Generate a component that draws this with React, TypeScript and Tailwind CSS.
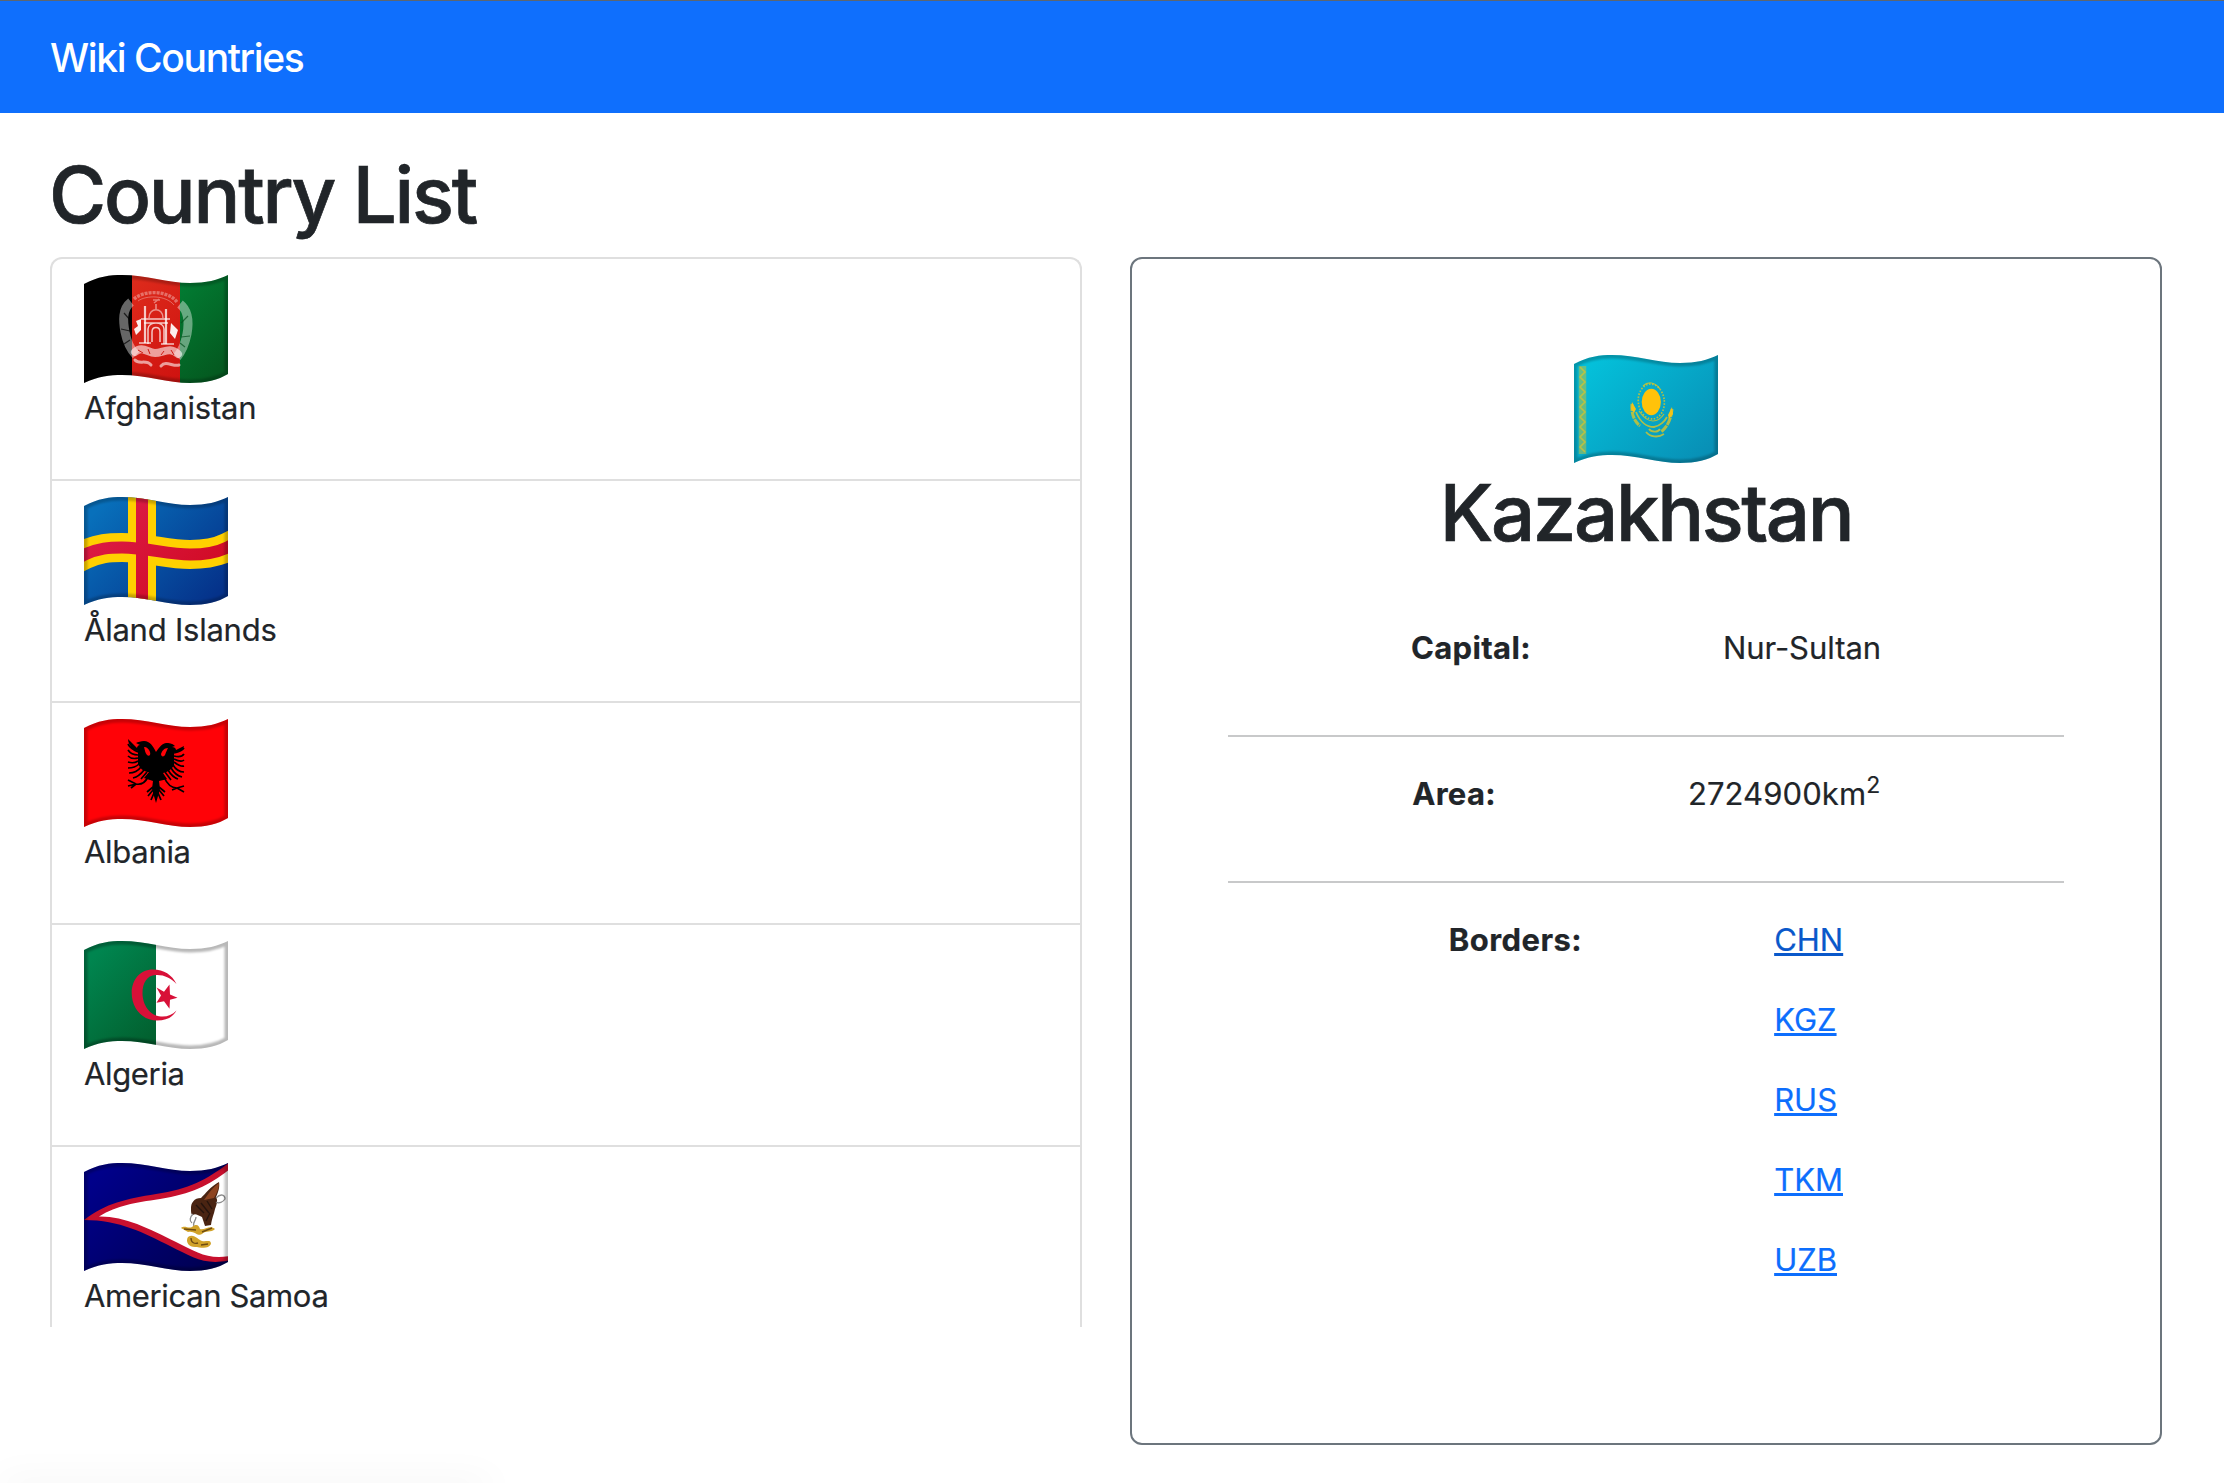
import { ReactNode, useId } from "react";

const WAVE =
  "M0 9 C14 1.5 26 0 38 0 C62 0 84 8 106 8 C122 8 134 5 144 0 V99 C134 105 122 108 106 108 C84 108 62 100 38 100 C26 100 14 101.5 0 108 Z";

const BAND =
  "M-12 64 L0 58 C14 51 26 50.5 38 50.5 C62 50.5 84 57.5 106 57.5 C122 57.5 134 55 144 50 L156 44";

function WavingFlag({ label, children, edge = 0.22 }: { label: string; children: ReactNode; edge?: number }) {
  const id = useId();
  return (
    <svg role="img" aria-label={label} viewBox="0 0 144 108" className="block h-[108px] w-[144px] shrink-0">
      <defs>
        <clipPath id={`${id}c`}>
          <path d={WAVE} />
        </clipPath>
        <filter id={`${id}b`} x="-10%" y="-10%" width="120%" height="120%">
          <feGaussianBlur stdDeviation="1" />
        </filter>
      </defs>
      <g clipPath={`url(#${id}c)`}>
        {children}
        <path d={WAVE} fill="none" stroke="#000" strokeOpacity={edge} strokeWidth="7" filter={`url(#${id}b)`} />
      </g>
    </svg>
  );
}

function Shade({ id, from, to }: { id: string; from: string; to: string }) {
  return (
    <defs>
      <linearGradient id={id} gradientUnits="userSpaceOnUse" x1="20" y1="5" x2="125" y2="105">
        <stop offset="0" stopColor={from} />
        <stop offset="1" stopColor={to} />
      </linearGradient>
    </defs>
  );
}

function Afghanistan() {
  return (
    <WavingFlag label="Flag of Afghanistan">
      <Shade id="af-r" from="#e0301e" to="#cc0d0d" />
      <Shade id="af-g" from="#00923f" to="#045a20" />
      <rect width="48" height="108" fill="#000" />
      <rect x="48" width="48" height="108" fill="url(#af-r)" />
      <rect x="96" width="48" height="108" fill="url(#af-g)" />
      <g fill="none" stroke="#fff">
        <path d="M47 27 C38 34 39 46 41 57 C43 67 46 74 52 80" strokeWidth="9" strokeOpacity="0.4" />
        <path d="M96 29 C105 36 105 48 103 59 C101 69 98 76 93 82" strokeWidth="9" strokeOpacity="0.4" />
        <path d="M50 24 C60 15 84 15 93 27" strokeWidth="3.4" strokeOpacity="0.34" strokeDasharray="3 1" />
        <path d="M54 26 C62 20 82 20 90 30" strokeWidth="0.8" strokeOpacity="0.4" />
      </g>
      <g stroke="#000" strokeOpacity="0.7" strokeWidth="1.2">
        <path d="M40 38 L47 46 M37 54 L46 56 M40 69 L46 65" />
        <path d="M104 41 L97 48 M106 61 L97 62 M101 72 L96 68" stroke="#04501d" />
      </g>
      <g fill="none" stroke="#fff" strokeOpacity="0.75" strokeWidth="1.5">
        <path d="M61 31 V68 M82 34 V69" strokeWidth="2.2" />
        <path d="M65 43 C65 32 79 32 79 43 M72 29 V34" strokeOpacity="0.5" />
        <path d="M57 44 H86 M60 48 H84 M64 69 V54 C64 46 80 46 80 54 V69 M68 67 V57 C68 51 76 51 76 57 V67" />
        <path d="M69 25 H76 M70 28 L75 24" strokeOpacity="0.4" />
        <path d="M55 68 H67 M77 69 H90" />
      </g>
      <path d="M52 46 L57 44 V55 L52 60 L50 54 L54 51 Z M87 48 L94 55 L91 64 L86 58 Z" fill="#fff" fillOpacity="0.92" />
      <g fill="none" stroke="#fff" strokeOpacity="0.58" strokeLinecap="round">
        <path d="M51 77 C58 70 64 78 71 78 C79 78 86 71 94 79" strokeWidth="8" />
        <path d="M51 85 C55 90 62 84 67 90 M77 91 C82 85 89 92 95 90" strokeWidth="3" />
      </g>
      <path d="M54 75 L59 78 M64 74 L66 79 M80 76 L77 80 M87 75 L90 80" stroke="#cf1c14" strokeWidth="1" />
    </WavingFlag>
  );
}

function Aland() {
  return (
    <WavingFlag label="Flag of Åland Islands">
      <Shade id="ax-b" from="#0870bb" to="#05328a" />
      <Shade id="ax-r" from="#dd1c49" to="#cf0820" />
      <rect width="144" height="108" fill="url(#ax-b)" />
      <rect x="44" width="28" height="108" fill="#ffd000" />
      <path d={BAND} fill="none" stroke="#ffd000" strokeWidth="29" />
      <rect x="52" width="12" height="108" fill="url(#ax-r)" />
      <path d={BAND} fill="none" stroke="url(#ax-r)" strokeWidth="12" />
    </WavingFlag>
  );
}

function Albania() {
  return (
    <WavingFlag label="Flag of Albania">
      <rect width="144" height="108" fill="#ff0207" />
      <path
        d="M72 33 C69 27 66 22 60 22 C57 22 54 23 52 24 L56 26 C54 26 53 28 53 29 L44 20 C44 24 46 27 50 31 L54 32 V45 C57 51 61 53 65 53 L60 59 C63 60 66 61 69 62 L68 70 L72 84 L76 70 L75 62 C78 61 81 61 83 60 L79 54 C84 53 88 50 90 46 V33 L94 33 C98 31 100 29 100 27 L92 31 C92 29 90 28 88 28 L91 27 C88 24 85 24 82 24 C77 25 75 29 72 33 Z"
        fill="#000"
      />
      <g fill="none" stroke="#000" strokeWidth="1.7">
        <path d="M54 33 C50 31 46 29 44 25 M54 36 C50 36 46 34 44 31 M54 39 C50 40 46 39 44 37 M54 42 C51 44 47 44 44 43 M55 45 C52 48 48 49 44 49 M57 48 C54 52 50 54 45 54 M60 51 C57 55 53 58 49 59 M63 53 L57 60" />
        <path d="M90 34 C94 33 98 32 100 29 M90 37 C94 38 98 38 100 35 M90 40 C94 42 98 43 100 41 M90 43 C94 46 97 48 100 47 M89 46 C92 51 96 53 100 53 M87 49 C90 54 94 57 98 58 M84 51 C87 56 91 59 94 60 M81 53 L87 61" />
        <path d="M64 58 C61 64 57 66 52 65 L44 67 M52 65 L44 61 M52 65 L47 69" />
        <path d="M80 58 C83 65 88 69 93 69 L100 67 M93 69 L100 73 M93 69 L88 71" />
        <path d="M69 68 L63 73 M69 71 L64 77 M70 74 L67 81 M75 68 L81 73 M75 71 L80 77 M74 74 L77 81" />
      </g>
      <path d="M60 28 C63 28 65 30 66 33 C67 36 65 38 63 36 C61 34 61 31 60 28 Z M84 29 C80 29 78 32 77 35 C77 38 80 38 81 36 C82 33 83 31 84 29 Z" fill="#ff0207" />
    </WavingFlag>
  );
}

function Algeria() {
  return (
    <WavingFlag label="Flag of Algeria" edge={0.28}>
      <Shade id="dz-g" from="#00854f" to="#034f20" />
      <rect width="144" height="108" fill="#fff" />
      <rect width="72" height="108" fill="url(#dz-g)" />
      <path
        d="M92.5 43 C88 34 80 28.6 69 28.6 C56 28.6 47.7 39 47.7 52 C47.7 67 58 79.5 73 79.5 C83 79.5 89 76 92.5 69.5 C88 74 83 76 77 75.5 C66 75 58.5 64 58.5 52 C58.5 42 63 34.5 71.5 34 C80 33.5 87 37 92.5 43 Z"
        fill="#d81038"
      />
      <path d="M85.5 43.5 L86 53.5 L93.5 56.7 L86 58.7 L85.5 67.8 L80 60.2 L72.5 61.8 L77 54.5 L72.5 46.5 L80 50.8 Z" fill="#d81038" />
    </WavingFlag>
  );
}

function AmericanSamoa() {
  return (
    <WavingFlag label="Flag of American Samoa" edge={0.24}>
      <Shade id="as-b" from="#00008a" to="#000052" />
      <rect width="144" height="108" fill="url(#as-b)" />
      <path d="M0 57 C22 40 42 36 72 31 C106 26 124 16 146 -1 V97 C122 103 108 94 86 83 C60 70 36 57 0 57 Z" fill="#c8102e" />
      <path d="M15 53.5 C34 42 50 40 76 36 C108 31 126 22 146 6 V93 C124 97 112 89 92 79 C64 65 40 53 15 53.5 Z" fill="#fff" />
      <path
        d="M135 19 C127 23 121 31 117 35 C110 35 107 40 107 45 C107 49 107 52 109 52 C111 50 114 52 118 54 L121 63 L127 62 C128 55 130 51 131 46 C133 41 134 37 132 34 C134 30 136 24 135 19 Z"
        fill="#4a2412"
      />
      <path d="M135 20 C129 24 124 31 120 37 L130 35 C133 30 135 25 135 20 Z" fill="#8d4420" />
      <path d="M112 42 L120 50 M117 40 L125 50 M123 38 L128 46 M122 58 L126 50" stroke="#26140d" strokeWidth="1.4" />
      <path d="M132 35 C137 30 141 32 141 36 C139 39 135 41 132 39 M109 51 C106 54 105 58 108 60 M112 54 C112 58 108 60 110 63" fill="none" stroke="#8c8c8c" strokeWidth="1.3" />
      <path d="M97 65 C101 62 104 66 108 64 C113 60 115 63 116 66 C120 68 126 61 131 66 C127 70 122 67 118 71 C114 74 110 67 104 69 Z" fill="#d2a32a" />
      <path d="M104 74 C110 70 114 77 118 78 C122 79 127 76 127 81 C124 87 116 84 111 84 C105 84 101 79 104 74 Z" fill="#d2a32a" />
      <path d="M107 75 C107 80 111 81 114 80 M117 82 L124 81 M100 66 L112 67 M118 69 L128 65" fill="none" stroke="#6e4b12" strokeWidth="1.4" />
    </WavingFlag>
  );
}

function Kazakhstan() {
  return (
    <WavingFlag label="Flag of Kazakhstan">
      <Shade id="kz-b" from="#04c0da" to="#0890b6" />
      <rect width="144" height="108" fill="url(#kz-b)" />
      <path d="M8.5 11 V99" stroke="#b6bf45" strokeOpacity="0.55" strokeWidth="7.5" />
      <path
        d="M6 12 L11 17 L6 22 L11 27 L6 32 L11 37 L6 42 L11 47 L6 52 L11 57 L6 62 L11 67 L6 72 L11 77 L6 82 L11 87 L6 92 L11 97"
        fill="none"
        stroke="#d6c32c"
        strokeOpacity="0.75"
        strokeWidth="1.6"
      />
      <ellipse cx="77.3" cy="47" rx="9.6" ry="13.2" fill="#ffc20a" />
      <g fill="none" stroke="#d9c428" strokeOpacity="0.8">
        <ellipse cx="77.3" cy="46.5" rx="13" ry="17.5" strokeWidth="1.7" strokeDasharray="1.6 1.5" transform="rotate(-6 77.3 46.5)" />
        <path d="M69 31 C74 26 81 27 86 34" strokeWidth="1.2" />
        <path d="M58 49 C57 58 60 66 66 71" strokeWidth="3" strokeDasharray="7 0.8" />
        <path d="M98 54 C97 64 94 71 87 77" strokeWidth="3" strokeDasharray="8 0.8" />
        <path d="M62 57 C66 67 73 72 80 72 C86 71 91 66 93 62" strokeWidth="1.8" />
        <path d="M65 56 C69 62 73 66 79 66 C84 66 88 62 90 59" strokeWidth="1.2" />
        <path d="M72 77 C76 82 84 83 90 79 M75 74 C77 77 84 78 86 74" strokeWidth="1.8" />
      </g>
      <path d="M58 47 L62 54 L60 58 L57 54 Z M98 52 L99 59 L95 64 L94 60 Z" fill="#f2c318" />
    </WavingFlag>
  );
}

const countries = [
  { name: "Afghanistan", tracking: "tracking-[-0.24px]", Flag: Afghanistan },
  { name: "Åland Islands", tracking: "tracking-[-0.23px]", Flag: Aland },
  { name: "Albania", tracking: "tracking-[-0.3px]", Flag: Albania },
  { name: "Algeria", tracking: "tracking-[-0.35px]", Flag: Algeria },
  { name: "American Samoa", tracking: "tracking-[-0.36px]", Flag: AmericanSamoa },
];

const borders = [
  { code: "CHN", color: "text-[#0a58ca]" },
  { code: "KGZ", color: "text-[#0d6efd]" },
  { code: "RUS", color: "text-[#0d6efd]" },
  { code: "TKM", color: "text-[#0d6efd]" },
  { code: "UZB", color: "text-[#0d6efd]" },
];

function Detail({ label, tracking, children }: { label: string; tracking: string; children: ReactNode }) {
  return (
    <div className="flex items-start justify-center gap-48">
      <span className={`font-bold ${tracking}`}>{label}</span>
      {children}
    </div>
  );
}

export default function App() {
  return (
    <div className="relative h-[1483px] w-full overflow-hidden bg-white font-['Inter',sans-serif] text-[31px] leading-[48px] text-[#212529] [-webkit-text-stroke-width:0.2px]">
      <nav className="h-[113px] border-t border-[#5d6670] bg-[#0f6ffd] px-[50px] pt-[33px]">
        <a className="text-[39px] leading-[48px] font-medium tracking-[-1.37px] text-white [-webkit-text-stroke-width:0px]">Wiki Countries</a>
      </nav>

      <h1 className="mt-[34px] ml-[49px] text-[78px] leading-[96px] font-medium tracking-[-2.25px] [-webkit-text-stroke-width:0.7px]">
        Country List
      </h1>

      <main className="mt-[14px] ml-[50px] flex items-start gap-12">
        <ul className="h-[1070px] w-[1032px] overflow-hidden rounded-t-xl border-2 border-b-0 border-[#dfdfdf]">
          {countries.map(({ name, tracking, Flag }) => (
            <li key={name} className="h-[222px] border-b-2 border-[#dfdfdf] px-[32px] pt-4">
              <Flag />
              <p className={`mt-px ${tracking}`}>{name}</p>
            </li>
          ))}
        </ul>

        <section className="flex h-[1188px] w-[1032px] flex-col rounded-xl border-2 border-[#6c757d] p-24">
          <div className="flex flex-col items-center">
            <Kazakhstan />
            <h2 className="mt-[2px] text-[78px] leading-[96px] font-medium tracking-[-2.4px] [-webkit-text-stroke-width:0.7px]">
              Kazakhstan
            </h2>
          </div>
          <div className="mt-[63px]">
            <Detail label="Capital:" tracking="tracking-[0.35px]">
              <span className="tracking-[-0.05px]">Nur-Sultan</span>
            </Detail>
          </div>
          <hr className="mt-[63px] mb-[33px] border-0 border-t-2 border-[#c8c9ca]" />
          <Detail label="Area:" tracking="tracking-[0.3px]">
            <span className="flex tracking-[0.1px]">
              2724900km<sup className="top-0 mt-[-9px] text-[23px] leading-[48px] tracking-[-0.5px]">2</sup>
            </span>
          </Detail>
          <hr className="mt-[63px] mb-[33px] border-0 border-t-2 border-[#c8c9ca]" />
          <Detail label="Borders:" tracking="tracking-[0.45px]">
            <ul className="flex flex-col gap-8">
              {borders.map(({ code, color }) => (
                <li key={code}>
                  <a className={`underline decoration-[3px] underline-offset-[2px] [text-decoration-skip-ink:none] ${color}`}>{code}</a>
                </li>
              ))}
            </ul>
          </Detail>
        </section>
      </main>

      <div className="absolute -bottom-2 left-0 h-2 w-[490px] shadow-[0_0_36px_rgba(0,0,0,0.1)]" />
    </div>
  );
}
